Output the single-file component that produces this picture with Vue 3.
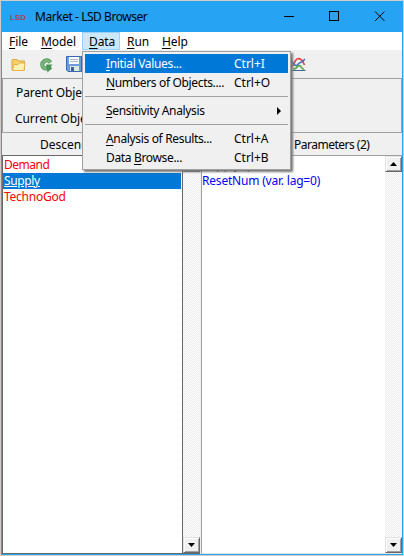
<script setup>
const menus = [
  { k: 'F', r: 'ile' },
  { k: 'M', r: 'odel' },
  { k: 'D', r: 'ata', active: true },
  { k: 'R', r: 'un' },
  { k: 'H', r: 'elp' },
]
const items = [
  { a: '', k: 'I', b: 'nitial Values...', s: 'Ctrl+I', sel: true },
  { a: '', k: 'N', b: 'umbers of Objects....', s: 'Ctrl+O' },
  { sep: true },
  { a: '', k: 'S', b: 'ensitivity Analysis', sub: true },
  { sep: true },
  { a: '', k: 'A', b: 'nalysis of Results...', s: 'Ctrl+A' },
  { a: 'Data ', k: 'B', b: 'rowse...', s: 'Ctrl+B' },
]
</script>

<template>
  <div class="window">
    <header class="titlebar">
      <svg class="logo" width="17" height="8" viewBox="0 0 17 8"><text x="0" y="7" textLength="16" lengthAdjust="spacingAndGlyphs">LSD</text></svg>
      <span class="title">Market - LSD Browser</span>
      <svg class="controls" width="110" height="31" viewBox="0 0 110 31" fill="none" stroke="#000">
        <path d="M4 15.500h10M49.500 10.500h9v9h-9z" shape-rendering="crispEdges" />
        <path d="M95 10.500l9.500 9.500M104.500 10.500L95 20" />
      </svg>
    </header>
    <nav class="menubar">
      <span v-for="m in menus" :key="m.k" class="menu" :class="[{ active: m.active }, 'm' + m.k]"><u>{{ m.k }}</u>{{ m.r }}</span>
    </nav>
    <div class="toolbar">
      <svg class="folder" width="15" height="14" viewBox="0 0 15 14">
        <path d="M1 12V2.500q0-1 1-1h4l1.500 1.500H13.500v9z" fill="#f6d06b" stroke="#dba03a" />
        <path d="M1.500 12.500L3 6.500h4l1.500-1.500H14L13 12.500z" fill="#fff0b4" stroke="#e5b04a" />
      </svg>
      <svg class="reload" width="13" height="15" viewBox="0 0 13 15">
        <path d="M10.500 4.500Q8 1 4.500 3Q1 5.500 3 9Q5 11.500 8 10" fill="none" stroke="#4f9659" stroke-width="4" />
        <path d="M10.500 4.500Q8 1 4.500 3Q1 5.500 3 9Q5 11.500 8 10" fill="none" stroke="#82bd84" stroke-width="2" />
        <path d="M6 6.500h6.500L11 8.500l1 2.500-2 1-2.500 2.500z" fill="#4b9457" />
      </svg>
      <svg class="save" width="16" height="16" viewBox="0 0 16 16">
        <path d="M.5.5h15v15H2l-1.500-1.500z" fill="#6d9be0" stroke="#3a66b4" />
        <path d="M3 1h10v7H3z" fill="#fff" /><path d="M4 3.500h8M4 5.500h8" stroke="#a8b6c8" />
        <path d="M4 10h9v5H4z" fill="#dcebd6" /><path d="M5 11h3v4H5z" fill="#3962a3" />
      </svg>
      <svg class="plot" width="16" height="15" viewBox="0 0 16 15" fill="none">
        <path d="M1.500 1v12.500h14" stroke="#45678d" />
        <path d="M2 10Q4 7 5.500 3.500Q8 .5 11 2.500Q13 4 14.500 8" stroke="#e64646" stroke-width="1.700" />
        <path d="M2 4q2 5 5 4.500Q10 5 12 5l3-3" stroke="#3a6fc0" stroke-width="1.500" />
        <path d="M3 12q3 0 5-3q2-1 3 1l3 3" stroke="#5aaa4c" stroke-width="1.700" />
      </svg>
    </div>
    <section class="info">
      <span class="parent">Parent Object:</span>
      <span class="current">Current Object:</span>
    </section>
    <div class="headings">
      <span class="hd1">Descendants</span>
      <span class="hd2">Parameters (2)</span>
    </div>
    <main class="lists">
      <div class="list left">
        <div class="rows">
          <div class="row demand">Demand</div>
          <div class="row picked">Supply</div>
          <div class="row techno">TechnoGod</div>
        </div>
        <div class="scroll">
          <span class="btn"><svg width="7" height="4"><path d="M0 4L3.500 0L7 4z" /></svg></span>
          <span class="btn"><svg width="7" height="4"><path d="M0 0h7L3.500 4z" /></svg></span>
        </div>
      </div>
      <div class="list right">
        <div class="rows">
          <div class="row dark">Supply (par.)</div>
          <div class="row blue">ResetNum (var. lag=0)</div>
        </div>
        <div class="scroll">
          <span class="btn"><svg width="7" height="4"><path d="M0 4L3.500 0L7 4z" /></svg></span>
          <span class="btn"><svg width="7" height="4"><path d="M0 0h7L3.500 4z" /></svg></span>
        </div>
      </div>
    </main>
    <div class="popup">
      <template v-for="(it, i) in items" :key="i">
        <div v-if="it.sep" class="sep"></div>
        <div v-else class="item" :class="{ sel: it.sel }">
          <span class="label">{{ it.a }}<u>{{ it.k }}</u>{{ it.b }}</span>
          <span v-if="it.s" class="key">{{ it.s }}</span>
          <svg v-if="it.sub" class="arrow" width="4" height="8"><path d="M0 0l4 4-4 4z" /></svg>
        </div>
      </template>
    </div>
  </div>
</template>

<style>
body { margin: 0; overflow: hidden; }
</style>

<style scoped>
.window { position: relative; box-sizing: border-box; width: 404px; height: 556px; display: flex; flex-direction: column; background: #f0f0f0; border: 1px solid #d2cdc8; font: 12px/16px "Noto Sans", "Open Sans", sans-serif; color: #000; white-space: nowrap; }
.window > * { border-left: 1px solid #26a3f2; border-right: 1px solid #26a3f2; }
u { text-decoration: underline; text-underline-offset: 2px; text-decoration-thickness: 1px; text-decoration-skip-ink: none; }
.titlebar { height: 31px; flex: none; display: flex; align-items: center; background: #26a3f2; }
.logo { margin-left: 8px; font: bold 7px "Liberation Sans", sans-serif; fill: #b83a58; }
.title { margin-left: 8px; width: 115px; letter-spacing: -.45px; }
.controls { margin-left: auto; margin-right: 12px; flex: none; }
.menubar { height: 18px; flex: none; display: flex; background: #fff; }
.menu { box-sizing: border-box; padding-left: 7px; line-height: 19px; letter-spacing: -.1px; }
.mF { width: 32px; } .mM { width: 48px; } .mD { width: 38px; } .mR { width: 35px; } .mH { width: 44px; }
.active { background: #cce8ff; box-shadow: inset 0 0 0 1px #99d1ff; }
.toolbar { height: 28px; flex: none; display: flex; align-items: center; }
.folder { margin-left: 9px; margin-top: 2px; }
.reload { margin-left: 14px; margin-top: 2px; }
.save { margin-left: 13px; }
.plot { margin-left: 208px; margin-top: 1px; }
.info { height: 55px; flex: none; display: flex; flex-direction: column; gap: 10px; padding: 7px 14px; box-sizing: border-box; box-shadow: inset 0 0 0 1px #a0a0a0; }
.current { margin-left: -1px; }
.info span { letter-spacing: -.1px; }
.headings { height: 22px; flex: none; display: flex; line-height: 23px; }
.hd1 { margin-left: 38px; width: 254px; }
.hd2 { letter-spacing: -.5px; }
.lists { flex: 1; display: flex; min-height: 0; border-bottom: 1px solid #26a3f2; }
.list { box-sizing: border-box; display: flex; background: #fff; border-bottom: 1px solid #e3e3e3; }
.left { width: 198px; border-top: 1px solid #696969; border-left: 1px solid #696969; border-bottom-color: #696969; }
.right { flex: 1; margin-left: 1px; border-left: 1px solid #a0a0a0; border-top: 1px solid #a0a0a0; }
.rows { flex: 1; padding-top: 1px; }
.left .rows { border-right: 1px solid #696969; }
.row { height: 16px; line-height: 16px; color: #f00; padding-left: 1px; }
.right .row { padding-left: 0; }
.demand { letter-spacing: -.5px; }
.techno { letter-spacing: -.25px; }
.row.picked { background: #0078d7; color: #fff; text-decoration: underline; letter-spacing: -.35px; margin-right: 1px; }
.row.blue { color: #00f; letter-spacing: -.2px; }
.row.dark { color: #222; }
.scroll { width: 17px; flex: none; display: flex; flex-direction: column; justify-content: space-between; background: conic-gradient(#fff 25%, #ececec 0 50%, #fff 0 75%, #ececec 0) 0 0 / 2px 2px; }
.btn { box-sizing: border-box; height: 16px; display: flex; align-items: center; justify-content: center; background: #f0f0f0; border: 1px solid; border-color: #e3e3e3 #696969 #696969 #e3e3e3; box-shadow: inset 1px 1px #fff, inset -1px -1px #a0a0a0; }
.popup { position: absolute; left: 81px; top: 50px; box-sizing: border-box; width: 209px; height: 119px; background: #f0f0f0; border: 1px solid #a0a0a0; padding: 2px; box-shadow: 2px 2px 2px #777; }
.item { height: 19px; display: flex; align-items: center; padding-left: 21px; }
.sel { background: #0078d7; color: #fff; }
.label { width: 128px; flex: none; letter-spacing: -.34px; }
.sep { height: 1px; margin: 4px 0; background: #a0a0a0; }
.arrow { margin-left: 43px; }
</style>
